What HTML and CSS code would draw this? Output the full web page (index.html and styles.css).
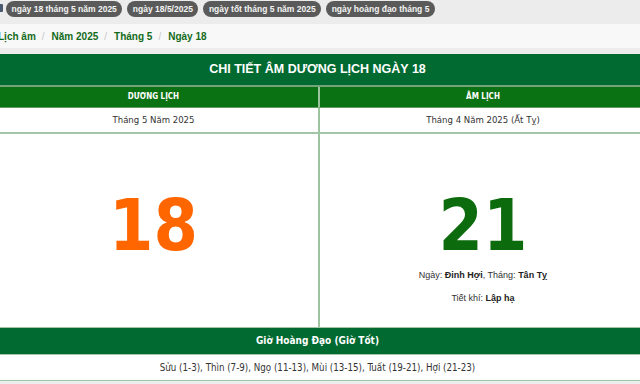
FILE: index.html
```html
<!DOCTYPE html>
<html lang="vi">
<head>
<meta charset="utf-8">
<title>Chi tiết âm dương lịch ngày 18</title>
<link rel="stylesheet" href="styles.css">
</head>
<body>
<div class="tags">
  <span class="tag-icon"></span>
  <a class="tag">ngày 18 tháng 5 năm 2025</a>
  <a class="tag">ngày 18/5/2025</a>
  <a class="tag">ngày tốt tháng 5 năm 2025</a>
  <a class="tag">ngày hoàng đạo tháng 5</a>
</div>
<nav class="crumbs">
  <a>Lịch âm</a><span class="sep">/</span>
  <a>Năm 2025</a><span class="sep">/</span>
  <a>Tháng 5</a><span class="sep">/</span>
  <a>Ngày 18</a>
</nav>
<section class="cal">
  <div class="title">CHI TIẾT ÂM DƯƠNG LỊCH NGÀY 18</div>
  <div class="grid">
    <div class="head">DƯƠNG LỊCH</div>
    <div class="head right">ÂM LỊCH</div>
    <div class="month">Tháng 5 Năm 2025</div>
    <div class="month right">Tháng 4 Năm 2025 (Ất Tỵ)</div>
    <div class="day">
      <div class="num solar">18</div>
    </div>
    <div class="day right">
      <div class="num lunar">21</div>
      <p class="info">Ngày: <b>Đinh Hợi</b>, Tháng: <b>Tân Tỵ</b></p>
      <p class="info">Tiết khí: <b>Lập hạ</b></p>
    </div>
  </div>
  <div class="hours-head">Giờ Hoàng Đạo (Giờ Tốt)</div>
  <div class="hours">Sửu (1-3), Thìn (7-9), Ngọ (11-13), Mùi (13-15), Tuất (19-21), Hợi (21-23)</div>
</section>
</body>
</html>
```
FILE: styles.css
```css
html, body {
  margin: 0;
  padding: 0;
}
body {
  background: #ececec;
  overflow: hidden;
  font-family: "Liberation Sans", Arial, sans-serif;
  width: 640px;
  height: 384px;
}
.tags {
  display: flex;
  align-items: flex-start;
  gap: 5px;
  height: 23px;
  padding-top: 1px;
}
.tag-icon {
  width: 10px;
  height: 8px;
  margin: 3px -2px 0 -7px;
  background: #4a5b70;
  border-radius: 1px;
}
.tag {
  display: block;
  background: #5a5a5a;
  color: #f4f4f4;
  font-family: "Liberation Sans", Arial, sans-serif;
  font-weight: bold;
  font-size: 8.5px;
  line-height: 16px;
  padding: 0 5.5px;
  border-radius: 8px;
}
.crumbs {
  display: flex;
  align-items: center;
  height: 24px;
  background: #f8f8f8;
  margin-left: -2px;
  font-size: 10px;
  font-weight: bold;
  color: #136b1a;
}
.sep {
  color: #c8c8c8;
  font-weight: normal;
  margin: 0 7px 0 6px;
}
.cal {
  margin-top: 6px;
  margin-left: -11px;
  width: 657px;
  background: #fff;
  border-bottom: 1px solid #a3c6a6;
}
.title {
  height: 31px;
  line-height: 31px;
  background: #006a31;
  color: #fff;
  font-weight: bold;
  font-size: 12.5px;
  text-align: center;
  border-bottom: 2px solid #72a37a;
}
.grid {
  display: grid;
  grid-template-columns: 329px 1fr;
}
.right {
  border-left: 2px solid #9cc59f;
}
.head {
  height: 20px;
  line-height: 20px;
  background: #0b7213;
  color: #fff;
  font-family: "DejaVu Sans Condensed", "DejaVu Sans", sans-serif;
  font-stretch: condensed;
  font-weight: bold;
  font-size: 8px;
  text-align: center;
  border-bottom: 1px solid #5f9a62;
}
.month {
  height: 24px;
  line-height: 24px;
  color: #333;
  font-family: "DejaVu Sans Condensed", "DejaVu Sans", sans-serif;
  font-stretch: condensed;
  font-size: 9.5px;
  text-align: center;
  border-bottom: 2px solid #a3c6a6;
}
.day {
  height: 193px;
  text-align: center;
}
.num {
  font-family: "DejaVu Sans Condensed", "DejaVu Sans", sans-serif;
  font-stretch: condensed;
  font-weight: bold;
  font-size: 71px;
  line-height: 72px;
  margin-top: 56px;
}
.solar { color: #ff6600; }
.lunar { color: #0c6b0c; }
.info {
  margin: 0;
  font-size: 9px;
  color: #333;
  line-height: 12px;
}
.info:first-of-type { margin-top: 7px; }
.info + .info { margin-top: 11px; }
.info b { color: #222; }
.hours-head {
  border-top: 1px solid #a3c6a6;
  height: 26px;
  line-height: 26px;
  background: #006a31;
  color: #fff;
  font-family: "DejaVu Sans Condensed", "DejaVu Sans", sans-serif;
  font-stretch: condensed;
  font-weight: bold;
  font-size: 10px;
  text-align: center;
  border-bottom: 1px solid #a3c6a6;
}
.hours {
  height: 25px;
  line-height: 25px;
  color: #333;
  font-family: "DejaVu Sans Condensed", "DejaVu Sans", sans-serif;
  font-stretch: condensed;
  font-size: 9.7px;
  text-align: center;
}
```
